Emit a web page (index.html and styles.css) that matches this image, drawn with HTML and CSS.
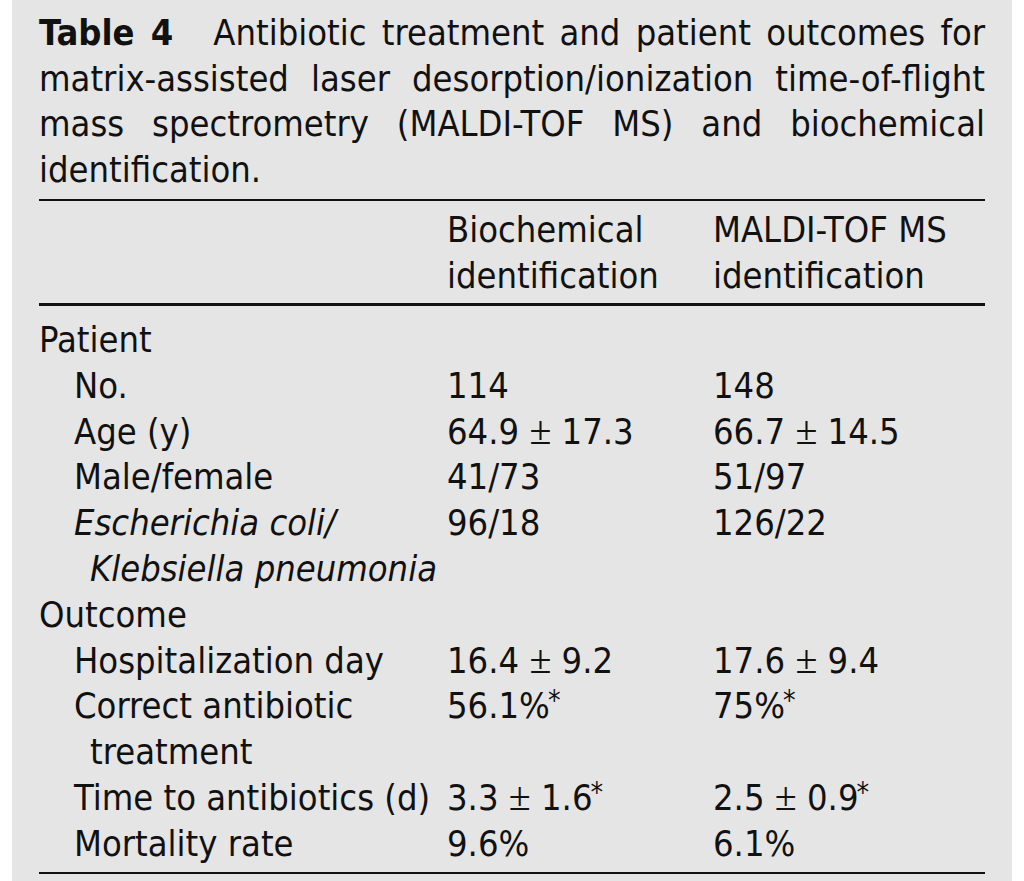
FILE: index.html
```html
<!DOCTYPE html>
<html>
<head>
<meta charset="utf-8">
<link rel="stylesheet" href="styles.css">
</head>
<body>
<div class="panel">
  <p class="caption">
    <span class="cap-line"><b class="label">Table 4</b>Antibiotic treatment and patient outcomes for</span>
    <span class="cap-line">matrix-assisted laser desorption/ionization time-of-flight</span>
    <span class="cap-line">mass spectrometry (MALDI-TOF MS) and biochemical</span>
    <span class="cap-line last">identification.</span>
  </p>
  <div class="table">
    <div class="thead">
      <div class="cell"></div>
      <div class="cell">Biochemical<br>identification</div>
      <div class="cell">MALDI-TOF MS<br>identification</div>
    </div>
    <div class="tbody">
      <div class="cell group">Patient</div><div class="cell"></div><div class="cell"></div>
      <div class="cell sub">No.</div><div class="cell">114</div><div class="cell">148</div>
      <div class="cell sub">Age (y)</div><div class="cell">64.9 <span class="pm">±</span> 17.3</div><div class="cell">66.7 <span class="pm">±</span> 14.5</div>
      <div class="cell sub">Male/female</div><div class="cell">41/73</div><div class="cell">51/97</div>
      <div class="cell sub"><i>Escherichia coli/</i><br><i class="cont">Klebsiella pneumonia</i></div><div class="cell">96/18</div><div class="cell">126/22</div>
      <div class="cell group">Outcome</div><div class="cell"></div><div class="cell"></div>
      <div class="cell sub">Hospitalization day</div><div class="cell">16.4 <span class="pm">±</span> 9.2</div><div class="cell">17.6 <span class="pm">±</span> 9.4</div>
      <div class="cell sub">Correct antibiotic<br><span class="cont">treatment</span></div><div class="cell">56.1%<sup class="ast">*</sup></div><div class="cell">75%<sup class="ast">*</sup></div>
      <div class="cell sub">Time to antibiotics (d)</div><div class="cell">3.3 <span class="pm">±</span> 1.6<sup class="ast">*</sup></div><div class="cell">2.5 <span class="pm">±</span> 0.9<sup class="ast">*</sup></div>
      <div class="cell sub">Mortality rate</div><div class="cell">9.6%</div><div class="cell">6.1%</div>
    </div>
  </div>
</div>
</body>
</html>
```
FILE: styles.css
```css
html, body {
  margin: 0;
  padding: 0;
  background: #ffffff;
}
body {
  font-family: "DejaVu Sans Condensed", "DejaVu Sans", sans-serif;
  font-size: 36px;
  line-height: 45.5px;
  color: #111111;
}
.panel {
  margin: 0 12px;
  min-height: 881px;
  box-sizing: border-box;
  background: #e5e5e5;
  padding: 10px 27px 0 27px;
}
.caption {
  margin: 0;
}
.cap-line {
  display: block;
  text-align: justify;
  text-align-last: justify;
  white-space: nowrap;
}
.cap-line.last {
  text-align-last: left;
}
.label {
  margin-right: 40px;
}
.table {
  margin-top: 7px;
  border-top: 2px solid #111;
  border-bottom: 2px solid #111;
}
.thead, .tbody {
  display: grid;
  grid-template-columns: 408px 266px 1fr;
}
.thead {
  padding: 6px 0 5px;
  border-bottom: 3px solid #111;
}
.tbody {
  padding: 11px 0 5px;
  line-height: 45.8px;
}
.sub {
  padding-left: 35px;
}
.cont {
  display: inline-block;
  padding-left: 16px;
}
.pm {
  font-family: "Liberation Serif", "DejaVu Serif", serif;
  font-size: 40px;
  line-height: 0;
}
.ast {
  font-size: 28px;
  line-height: 0;
  vertical-align: 8px;
  margin-left: -2px;
}
```
